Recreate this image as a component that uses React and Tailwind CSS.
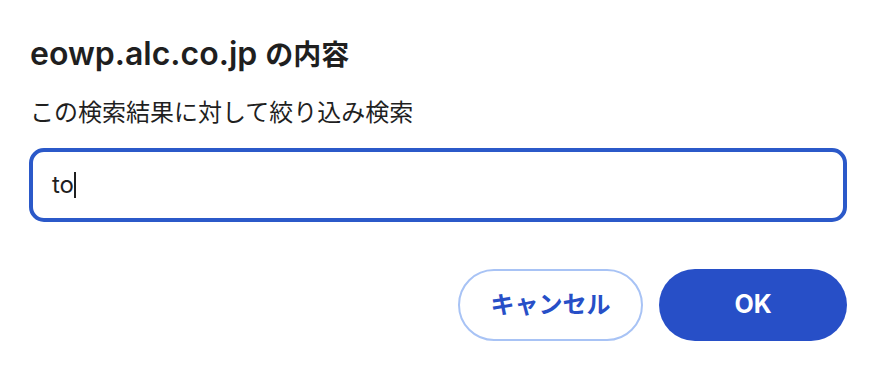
export default function App() {
  return (
    <div
      className="w-[878px] h-[372px] bg-white flex flex-col pl-[30px] pr-[31px] pt-[34px]"
      style={{ fontFamily: '"Inter", "Noto Sans CJK JP", sans-serif' }}
    >
      <h1 className="text-[32px] leading-[40px] font-semibold text-[#1f1f1f]">
        eowp.alc.co.jp <span className="text-[28px]">の内容</span>
      </h1>
      <p className="mt-[22px] text-[24px] leading-[32px] text-[#1f1f1f]">
        この検索結果に対して絞り込み検索
      </p>
      <div className="mt-[19px] -ml-px h-[74px] rounded-[15px] border-[4px] border-[#2b59c9] flex items-center pl-[19px]">
        <span className="text-[24px] text-[#1f1f1f]">to</span>
        <span className="w-[2px] h-[26px] bg-[#1f1f1f]" />
      </div>
      <div className="mt-[47px] flex justify-end gap-[16px]">
        <button className="w-[185px] h-[72px] rounded-full border-2 border-[#a8c3f5] bg-white text-[#274fc7] text-[24px] font-bold">
          キャンセル
        </button>
        <button className="w-[188px] h-[72px] rounded-full bg-[#274fc7] text-white text-[25px] font-bold">
          OK
        </button>
      </div>
    </div>
  );
}
